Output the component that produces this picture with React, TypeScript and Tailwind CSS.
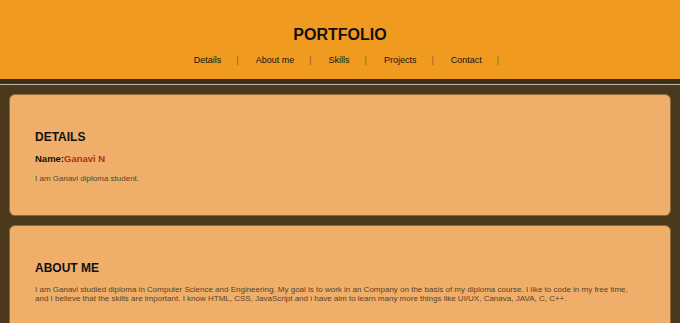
export default function App(): JSX.Element {
  const links = ["Details", "About me", "Skills", "Projects", "Contact"];

  return (
    <div className="min-h-screen bg-[#4a391d] font-['Liberation_Sans',Arial,sans-serif]">
      {/* Header */}
      <header className="bg-[#f09b20] h-[83px] border-b-4 border-[#3e2f15] pt-[26px] flex flex-col items-center">
        <h1 className="text-[16px] leading-[18px] font-bold text-[#111]">PORTFOLIO</h1>
        <ul className="flex pl-[13px] mt-[11px] text-[9px] leading-[11px] text-[#111]">
          {links.map((l, i) => (
            <li key={l} className="flex">
              <span>{l}</span>
              <span className={`ml-[15px] text-[#8a5f1e] ${i < links.length - 1 ? "mr-[17px]" : ""}`}>|</span>
            </li>
          ))}
        </ul>
      </header>
      <div className="h-px mt-px bg-[#bdb6ab]"></div>

      {/* Cards */}
      <div className="flex flex-col gap-[9px] px-[9px] pt-[9px]">
        <section className="rounded-[6px] border border-[#8a6a3c] bg-[#efaf6a] px-[25px] pt-[35px] pb-[32px] h-[122px]">
          <h2 className="text-[12px] leading-[14px] font-bold text-[#111]">DETAILS</h2>
          <p className="mt-[9px] text-[9.5px] leading-[11px] font-bold text-[#111]">
            Name:<span className="text-[#c0271a]">Ganavi N</span>
          </p>
          <p className="mt-[10px] text-[8px] leading-[10px] text-[#574426]">I am Ganavi diploma student.</p>
        </section>

        <section className="rounded-[6px] border border-[#8a6a3c] bg-[#efaf6a] px-[25px] pt-[35px] pb-[32px]">
          <h2 className="text-[12px] leading-[14px] font-bold text-[#111]">ABOUT ME</h2>
          <p className="mt-[10px] text-[8px] leading-[9px] text-[#574426] max-w-[600px]">
            I am Ganavi studied diploma in Computer Science and Engineering. My goal is to work in an Company on the basis of my diploma course. I like to code in my free time, and I believe that the skills are important. I know HTML, CSS, JavaScript and i have aim to learn many more things like UI/UX, Canava, JAVA, C, C++.
          </p>
        </section>
      </div>
    </div>
  );
}
